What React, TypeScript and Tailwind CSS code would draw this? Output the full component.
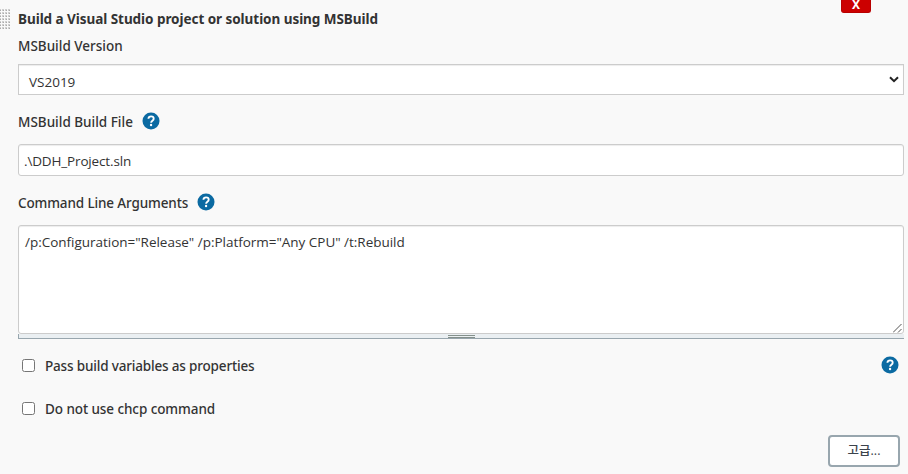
import type { ReactNode } from 'react';

function HelpIcon() {
  return (
    <svg className="mb-0.5 size-[18px] shrink-0" viewBox="0 0 512 512" role="img" aria-label="Help">
      <circle cx="256" cy="256" r="242" fill="#0b6aa2" />
      <path
        d="M182 192c4-44 36-67 75-67 44 0 76 25 76 65 0 56-74 58-74 113"
        fill="none"
        stroke="#fff"
        strokeWidth="52"
      />
      <circle cx="258" cy="370" r="34" fill="#fff" />
    </svg>
  );
}

function FieldLabel({ children, help }: { children: ReactNode; help?: boolean }) {
  return (
    <div className="flex h-5 items-center gap-[9px] font-['Noto_Sans',sans-serif] text-[13.5px] font-medium text-[#333]">
      {children}
      {help && <HelpIcon />}
    </div>
  );
}

function CheckRow({ children }: { children: ReactNode }) {
  return (
    <label className="flex h-5 items-center gap-2.5 pl-1 font-['Noto_Sans',sans-serif] text-[13.5px] font-medium text-[#333]">
      <input
        type="checkbox"
        className="mb-0.5 size-[13px] shrink-0 appearance-none rounded-[2.5px] border border-[#767676] bg-white"
      />
      {children}
    </label>
  );
}

export default function App() {
  return (
    <main className="flex h-[474px] w-[908px] overflow-hidden bg-[#f9f9f9] font-['Open_Sans','Noto_Sans_CJK_KR',sans-serif] text-[13.5px] text-[#333]">
      <svg className="mt-[9px] h-5 w-[10px] shrink-0" shapeRendering="crispEdges" aria-hidden="true">
        <defs>
          <pattern id="grip" width="3" height="3" x="-1" patternUnits="userSpaceOnUse">
            <rect width="2" height="2" fill="#cfcfcf" />
            <rect x="1" y="1" width="1" height="1" fill="#aaa" />
          </pattern>
        </defs>
        <rect width="10" height="20" fill="url(#grip)" />
      </svg>

      <section className="ml-2 flex w-[886px] shrink-0 flex-col">
        <header className="flex h-[36px] shrink-0 items-start justify-between">
          <h1 className="mt-[9px] font-['Noto_Sans',sans-serif] text-[13.5px] leading-5 font-bold tracking-[-0.05px]">
            Build a Visual Studio project or solution using MSBuild
          </h1>
          <button className="mr-[33px] flex h-[13px] w-[30px] items-start justify-center rounded-b-[3px] border border-t-0 border-[#b80000] bg-[#cc0000] font-['Noto_Sans',sans-serif] text-[12px] leading-[9px] font-bold text-white">
            X
          </button>
        </header>

        <FieldLabel>MSBuild Version</FieldLabel>
        <div className="mt-2 flex h-[31px] shrink-0 items-center justify-between border border-[#ccc] bg-white pr-[3px] pl-[10px] shadow-[inset_0_1px_1px_rgba(0,0,0,0.075)]">
          <span className="pt-[5px]">VS2019</span>
          <svg className="h-[7px] w-[12px]" viewBox="0 0 12 7" fill="none" aria-hidden="true">
            <path d="M2 1.2l4 4 4-4" stroke="#222" strokeWidth="2" />
          </svg>
        </div>

        <div className="mt-[17px]">
          <FieldLabel help>MSBuild Build File</FieldLabel>
        </div>
        <input
          className="mt-3 h-8 shrink-0 rounded-[3px] border border-[#ccc] bg-white px-[5px] pt-[2px] tracking-[-0.15px] shadow-[inset_0_1px_1px_rgba(0,0,0,0.075)]"
          defaultValue=".\DDH_Project.sln"
        />

        <div className="mt-[17px]">
          <FieldLabel help>
            <span className="tracking-[-0.13px]">Command Line Arguments</span>
          </FieldLabel>
        </div>
        <div className="mt-3 shrink-0 border-b border-[#98a6ae]">
          <div className="flex h-[109px] items-start justify-between rounded-[3px] border border-[#ccc] bg-white pl-[6px] shadow-[inset_0_1px_1px_rgba(0,0,0,0.075)]">
            <p className="mt-[6px] leading-5 tracking-[-0.02px]">
              /p:Configuration="Release" /p:Platform="Any CPU" /t:Rebuild
            </p>
            <svg className="mr-px size-[9px] self-end" viewBox="0 0 9 9" stroke="#555" strokeWidth="1" aria-hidden="true">
              <path d="M0 8.5L8.5 0M5 8.5L8.5 5" />
            </svg>
          </div>
          <div className="flex h-1 items-start justify-center border-l border-[#98a6ae] bg-[#eaeff2] pt-px">
            <div className="h-[3px] w-[27px] border-y border-[#84908b]" />
          </div>
        </div>

        <div className="mt-[17px] flex items-center justify-between pr-[5px]">
          <CheckRow>
            <span className="tracking-[-0.17px]">Pass build variables as properties</span>
          </CheckRow>
          <HelpIcon />
        </div>
        <div className="mt-[23px]">
          <CheckRow>
            <span className="tracking-[-0.08px]">Do not use chcp command</span>
          </CheckRow>
        </div>

        <button className="mt-4 mr-1 flex h-8 w-[72px] shrink-0 items-center justify-center self-end rounded-[4px] border-2 border-[#98a6ae] bg-white text-[12.5px] font-medium text-[#3c434c]">
          고급...
        </button>
      </section>
    </main>
  );
}
